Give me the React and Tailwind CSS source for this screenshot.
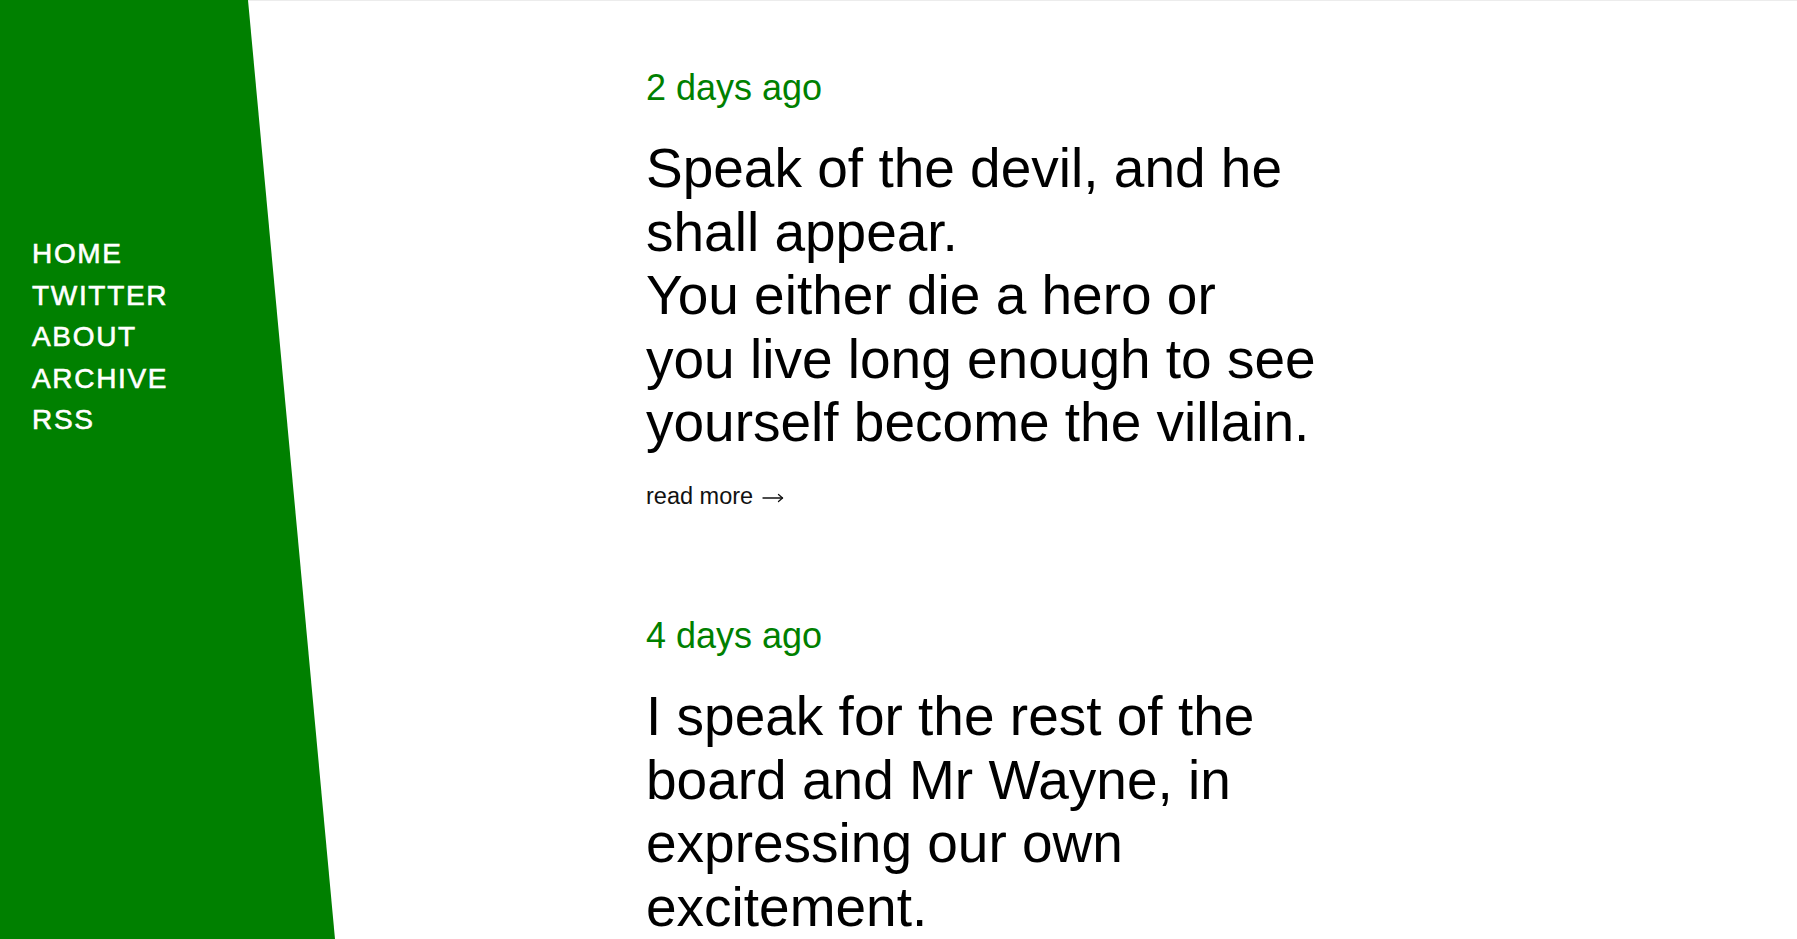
import React from "react";

const posts = [
  {
    date: "2 days ago",
    lines: [
      "Speak of the devil, and he",
      "shall appear.",
      "You either die a hero or",
      "you live long enough to see",
      "yourself become the villain.",
    ],
  },
  {
    date: "4 days ago",
    lines: [
      "I speak for the rest of the",
      "board and Mr Wayne, in",
      "expressing our own",
      "excitement.",
    ],
  },
];

const nav = ["HOME", "TWITTER", "ABOUT", "ARCHIVE", "RSS"];

function Arrow() {
  return (
    <svg
      width="22"
      height="10"
      viewBox="0 0 22 10"
      className="inline-block align-middle ml-[9px]"
      fill="none"
      stroke="#111"
      strokeWidth="1.3"
      strokeLinecap="round"
      strokeLinejoin="round"
    >
      <path d="M1 5H20.5" />
      <path d="M16.5 1.5L20.5 5L16.5 8.5" />
    </svg>
  );
}

export default function App() {
  return (
    <div className="flex items-start min-h-screen bg-white border-t border-[#ececec] font-['Liberation_Sans',Arial,sans-serif]">
      <aside className="sticky top-0 -mt-px h-[939px] w-[335px] shrink-0 self-start bg-[#008000] [clip-path:polygon(0_0,248px_0,100%_100%,0_100%)]">
        <nav className="flex flex-col pl-[32px] pt-[233px]">
          {nav.map((n) => (
            <a
              key={n}
              href="#"
              className="text-white text-[28px] leading-[41.5px] tracking-[0.06em] [-webkit-text-stroke:0.6px_white]"
            >
              {n}
            </a>
          ))}
        </nav>
      </aside>
      <main className="pl-[311px] pt-[67px] flex flex-col gap-[106px]">
        {posts.map((p) => (
          <article key={p.date} className="flex flex-col">
            <div className="text-[36px] leading-[40px] text-[#008000]">{p.date}</div>
            <h2 className="mt-[29px] whitespace-nowrap text-[55px] leading-[63.6px] text-black font-normal">
              {p.lines.map((l, i) => (
                <React.Fragment key={i}>
                  {i > 0 && <br />}
                  {l}
                </React.Fragment>
              ))}
            </h2>
            <a href="#" className="mt-[28px] text-[23.5px] leading-[27px] text-[#111]">
              read more
              <Arrow />
            </a>
          </article>
        ))}
      </main>
    </div>
  );
}
